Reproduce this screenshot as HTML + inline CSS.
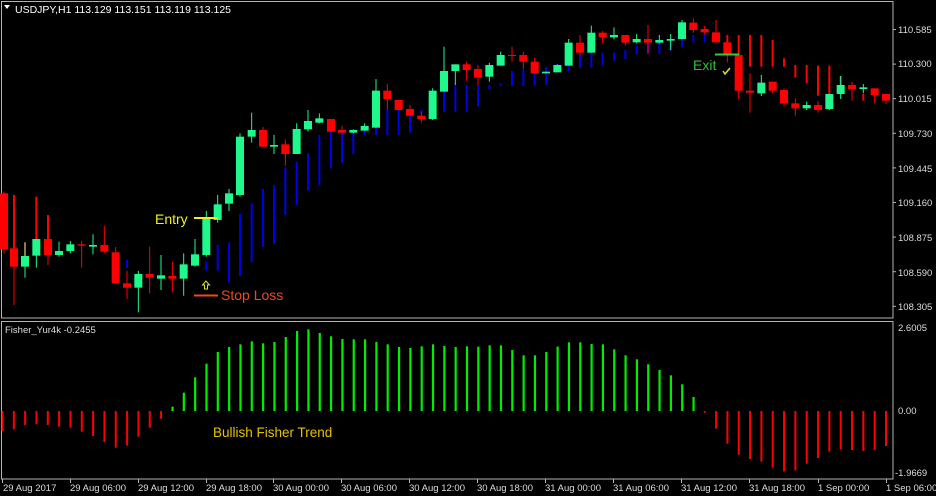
<!DOCTYPE html>
<html><head><meta charset="utf-8"><style>
html,body{margin:0;padding:0;background:#000;width:936px;height:496px;overflow:hidden}
svg{display:block}
text{font-family:"Liberation Sans",sans-serif}
</style></head><body>
<svg id="s" width="936" height="496" xmlns="http://www.w3.org/2000/svg">
<rect width="936" height="496" fill="#000"/>
<g fill="none" stroke="#b4b4b4" stroke-width="1">
<rect x="1.5" y="1.5" width="891.5" height="316.5"/>
<rect x="1.5" y="321.5" width="891.5" height="157.5"/>
</g>
<g id="c"></g>
<polygon points="4,5 10,5 7,9" fill="#fff"/>
<text x="15" y="13" fill="#fff" font-size="10.5">USDJPY,H1  113.129 113.151 113.119 113.125</text>
<text x="5" y="333" fill="#ddd" font-size="9.5">Fisher_Yur4k -0.2455</text>
<text x="155" y="224" fill="#f0f020" font-size="14">Entry</text>
<line x1="194" y1="218" x2="218" y2="218" stroke="#f0f020" stroke-width="2"/>
<text x="221" y="300" fill="#f04818" font-size="14">Stop Loss</text>
<line x1="194" y1="295.5" x2="218" y2="295.5" stroke="#f04818" stroke-width="2"/>
<path d="M206,281 L202.5,285 L204.5,285 L204.5,289 L207.5,289 L207.5,285 L209.5,285 Z" fill="none" stroke="#e0e020" stroke-width="1"/>
<text x="693" y="70" fill="#30c030" font-size="14">Exit</text>
<line x1="715" y1="54.5" x2="739" y2="54.5" stroke="#30d030" stroke-width="2"/>
<path d="M723,71 L725,74 L730,68" stroke="#e0e020" stroke-width="1.5" fill="none"/>
<text x="213" y="437" fill="#e8c000" font-size="13.5">Bullish Fisher Trend</text>
<g fill="#ddd" font-size="9.5" id="ax">
<text x="898" y="33">110.585</text><text x="898" y="67">110.300</text><text x="898" y="102">110.015</text>
<text x="898" y="137">109.730</text><text x="898" y="172">109.445</text><text x="898" y="206">109.160</text>
<text x="898" y="241">108.875</text><text x="898" y="276">108.590</text><text x="898" y="310">108.305</text>
<text x="898" y="331">2.6005</text><text x="898" y="414">0.00</text><text x="895" y="476">-1.9669</text>
</g>
<g fill="#ddd" font-size="9.5">
<text x="3" y="491">29 Aug 2017</text><text x="70" y="491">29 Aug 06:00</text><text x="138" y="491">29 Aug 12:00</text>
<text x="206" y="491">29 Aug 18:00</text><text x="273" y="491">30 Aug 00:00</text><text x="341" y="491">30 Aug 06:00</text>
<text x="409" y="491">30 Aug 12:00</text><text x="477" y="491">30 Aug 18:00</text><text x="545" y="491">31 Aug 00:00</text>
<text x="613" y="491">31 Aug 06:00</text><text x="681" y="491">31 Aug 12:00</text><text x="749" y="491">31 Aug 18:00</text>
<text x="818" y="491">1 Sep 00:00</text><text x="886" y="491">1 Sep 06:00</text>
</g>
</svg>
<script>
var g=document.getElementById('c'),NS='http://www.w3.org/2000/svg';
function r(x,y,w,h,f){var e=document.createElementNS(NS,'rect');e.setAttribute('x',x);e.setAttribute('y',y);e.setAttribute('width',w);e.setAttribute('height',Math.max(h,1));e.setAttribute('fill',f);g.appendChild(e);}
var G='#1ef88c',R='#ff0000',B='#0000e6';
// axis ticks
for(var i=0;i<9;i++){r(893,29+i*34.6,3,1,'#b4b4b4');}
[2,70,138,206,273,341,409,477,545,613,681,749,818,886].forEach(function(x){r(x,479,1,4,'#b4b4b4');});
// blue/red stop lines [origin, xz, top, bot, color]
var L=[[0,381,780,803],[0,619,785,812],[0,653,735,812],[0,687,727,848],[0,720,642,828],[0,755,610,787],[0,789,567,740],[0,822,555,732],[0,856,502,645],[0,890,485,615],[0,924,460,572],[0,958,405,555],
[320,33,395,505],[320,66,398,488],[320,100,398,462],[320,134,392,405],[320,168,332,405],[320,202,330,405],[320,236,330,405],[320,270,330,398],[320,304,330,340],[320,338,318,335],[320,372,263,335],[320,406,255,335],[320,440,255,335],[320,474,255,320],[320,508,255,267],[320,542,250,258],[320,576,213,258],[320,610,208,258],[320,644,197,258],[320,678,200,255],[320,712,193,215],[320,746,178,213],[320,780,167,203],[320,814,158,203],[320,848,158,195],[320,882,158,182],[320,916,150,177],[320,950,137,163],
[616,96,122,162],[616,130,122,162],[616,164,117,152],[616,198,105,142],[616,232,105,127],[616,266,97,127],[616,300,103,120],
[616,334,105,130,R],[616,368,105,165,R],[616,402,105,200,R],[616,436,105,200,R],[616,470,120,200,R],[616,504,175,200,R],[616,538,195,232,R],[616,572,195,250,R],[616,606,197,287,R],[616,640,197,287,R],[616,674,228,255,R],[616,742,282,302,R],[0,12,580,748,R],[0,42,585,745,R],[0,75,727,768,R],[0,109,590,717,R],[0,144,645,717,R]];
L.forEach(function(a){r(a[0]+a[1]/3-1,a[2]/3,2,(a[3]-a[2])/3,a[4]||B);});
// candles [origin,xz,bt,bb,wt,wb,col]
var C=[[0,12,580,748,575,760,R],[0,42,745,800,735,915,R],[0,75,768,800,727,833,G],[0,109,717,767,717,803,G],[0,144,717,765,717,795,R],[0,177,753,765,725,770,G],[0,211,733,753,723,760,G],[0,245,733,737,723,803,R],[0,279,735,740,703,763,G],[0,313,735,755,678,760,R],[0,347,757,850,741,850,R],[0,381,850,863,813,897,R],[0,415,822,863,813,937,G],[0,449,822,833,740,880,R],[0,483,826,836,765,870,G],[0,517,828,836,785,877,R],[0,551,793,836,760,887,G],[0,585,763,797,717,800,G],[0,619,657,765,633,770,G],[0,653,613,660,585,668,G],[0,687,580,611,567,633,G],[0,720,410,585,400,590,G],[0,755,390,410,338,428,G],[0,789,390,440,381,440,R],[0,822,435,440,405,462,G],[0,856,433,462,418,497,R],[0,890,387,462,370,462,G],[0,924,363,388,330,395,G],[0,958,355,368,340,370,G],
[320,33,357,395,357,395,R],[320,66,390,398,378,400,R],[320,100,390,398,388,400,G],[320,134,378,392,370,392,G],[320,168,272,383,237,383,G],[320,202,272,297,252,330,R],[320,236,300,330,300,330,R],[320,270,327,347,315,347,R],[320,304,347,357,335,368,R],[320,338,272,357,265,360,G],[320,372,213,275,140,275,G],[320,406,193,213,193,255,G],[320,440,193,210,185,243,R],[320,474,207,233,195,255,R],[320,508,195,230,188,245,G],[320,542,165,197,155,197,G],[320,576,165,168,140,185,R],[320,610,165,185,155,207,R],[320,644,185,220,173,220,R],[320,678,215,220,215,220,G],[320,712,195,217,193,217,G],[320,746,128,197,117,197,G],[320,780,128,158,105,167,R],[320,814,98,158,77,158,G],[320,848,98,112,93,130,R],[320,882,105,112,82,118,G],[320,916,105,128,105,137,R],[320,950,117,127,102,130,G],
[616,96,117,128,75,160,R],[616,130,120,128,105,130,G],[616,164,117,122,102,150,G],[616,198,67,117,60,117,G],[616,232,68,90,55,98,R],[616,266,87,97,78,103,R],[616,300,97,127,60,127,R],[616,334,127,162,105,187,R],[616,368,165,272,165,297,R],[616,402,272,278,220,338,R],[616,436,248,280,225,288,G],[616,470,245,272,245,280,R],[616,504,270,310,265,320,R],[616,538,310,325,295,347,R],[616,572,315,325,305,330,G],[616,606,315,330,303,338,R],[616,640,282,327,282,330,G],[616,674,255,282,228,297,G],[616,708,255,267,245,302,R],[616,742,262,267,252,280,G],[616,776,265,285,265,310,R],[616,810,282,302,282,312,R]];
C.forEach(function(a){var x=a[0]+a[1]/3;r(x-0.5,a[4]/3,1,(a[5]-a[4])/3,a[6]);r(x-4,a[2]/3,8,(a[3]-a[2])/3,a[6]);});
// histogram
var H=[345,340,327,325,327,332,335,347,360,378,395,389,362,335,308,272,230,184,143,108,93,85,76,82,78,63,45,40,51,61,69,70,70,78,85,93,96,91,85,90,93,91,92,88,88,102,118,118,108,92,79,79,84,85,100,118,130,145,162,178,205,243,290,338,383,416,429,437,455,466,463,443,426,407,399,402,405,402,390];
H.forEach(function(z,i){var x=2.5+i*11.327,y=316+z/3,z0=411;
 if(i>=15&&i<=61){r(x-1,y,2.2,z0-y,'#00ee00');}else{r(x-1,z0,2,y-z0,'#ff0000');}});
</script>
</body></html>
